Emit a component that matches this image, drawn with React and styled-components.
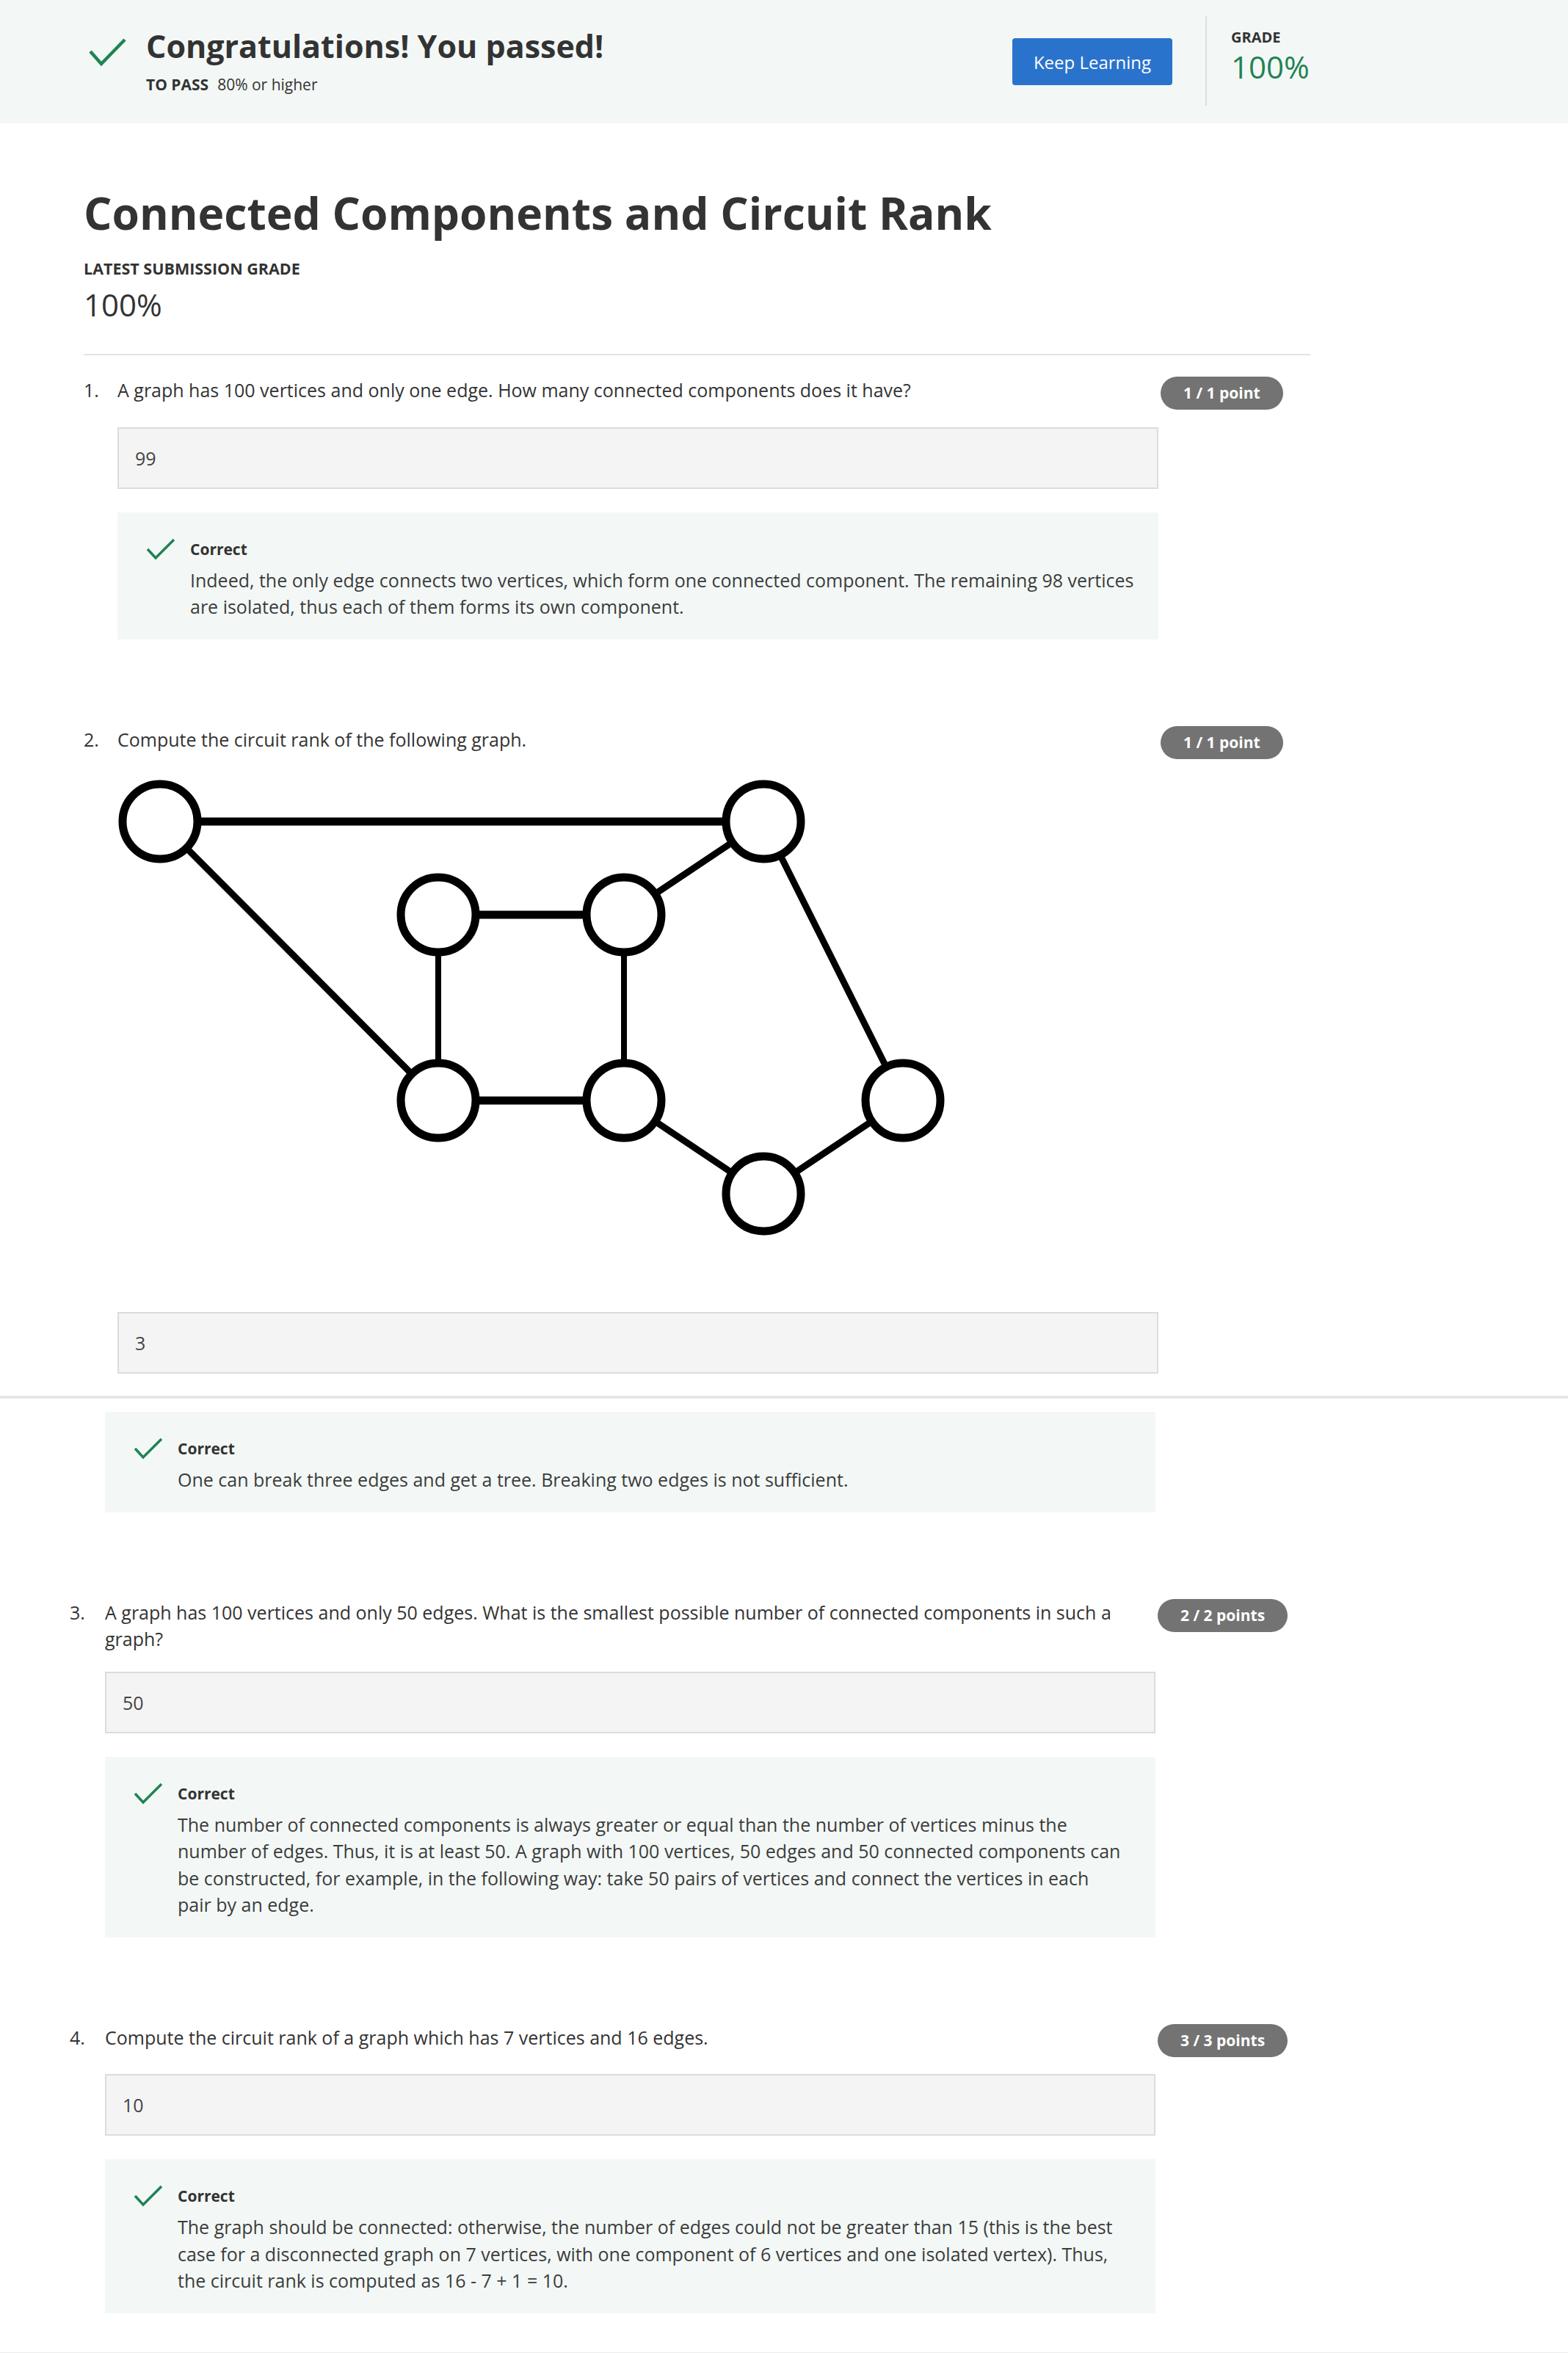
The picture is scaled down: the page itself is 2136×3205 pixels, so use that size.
import React from 'react';
import styled, { createGlobalStyle } from 'styled-components';

const GlobalStyle = createGlobalStyle`
  body {
    margin: 0;
    background: #fff;
    font-family: 'Open Sans', 'Liberation Sans', sans-serif;
    color: #333;
  }
`;

const Page = styled.div`
  width: 2136px;
`;

/* ---------- result banner ---------- */

const Banner = styled.header`
  display: flex;
  height: 168px;
  box-sizing: border-box;
  padding: 0 299px 0 121px;
  background: #f3f8f6;
`;

const PassGroup = styled.div`
  flex: 1;
  display: flex;
  gap: 26px;
  padding-top: 37px;
`;

const BigCheck = styled.svg`
  flex-shrink: 0;
  margin-top: 14px;
`;

const PassTitle = styled.h2`
  margin: 0;
  font-size: 43px;
  line-height: 52px;
  font-weight: 700;
  color: #333;
`;

const PassMeta = styled.div`
  margin-top: 11px;
  font-size: 21px;
  line-height: 30px;
  color: #333;

  b {
    font-weight: 700;
    margin-right: 12px;
  }
`;

const KeepButton = styled.button`
  align-self: center;
  width: 218px;
  height: 64px;
  border: none;
  border-radius: 4px;
  background: #2a73cc;
  color: #fff;
  font-family: inherit;
  font-size: 24px;
  cursor: pointer;
`;

const Divider = styled.div`
  width: 2px;
  margin: 22px 33px 24px 45px;
  background: #dedede;
`;

const GradeBlock = styled.div`
  width: 160px;
  padding-top: 37px;
`;

const GradeLabel = styled.div`
  font-size: 20px;
  line-height: 28px;
  font-weight: 700;
  color: #333;
`;

const GradeValue = styled.div`
  font-size: 42px;
  line-height: 52px;
  color: #1f8354;
`;

/* ---------- sheets ---------- */

const Sheet = styled.section`
  padding: ${(p) => p.$pad};
  border-bottom: ${(p) => p.$edge};
`;

const Title = styled.h1`
  margin: 0;
  font-size: 60.5px;
  line-height: 72px;
  font-weight: 700;
  color: #333;
`;

const SubLabel = styled.div`
  margin-top: 25px;
  font-size: 21.5px;
  line-height: 30px;
  font-weight: 700;
  text-transform: uppercase;
`;

const Score = styled.div`
  margin-top: 7px;
  font-size: 42px;
  line-height: 54px;
  color: #333;
`;

const Rule = styled.hr`
  width: 1671px;
  height: 2px;
  margin: 40px 0 29px;
  border: none;
  background: #e4e4e4;
`;

const Question = styled.div`
  display: grid;
  grid-template-columns: ${(p) => p.$num}px ${(p) => p.$col}px auto;
  align-items: start;
  margin-bottom: ${(p) => (p.$last ? 0 : 118)}px;
`;

const Num = styled.div`
  font-size: 25px;
  line-height: 36.5px;
  color: #333;
`;

const Prompt = styled.div`
  font-size: 25px;
  line-height: 36.5px;
  color: #333;
`;

const Badge = styled.span`
  grid-column: 3;
  grid-row: 1 / span 2;
  justify-self: start;
  margin-left: 3px;
  height: 45px;
  padding: 0 31px;
  border-radius: 23px;
  background: #737373;
  color: #fff;
  font-size: 21px;
  line-height: 45px;
  font-weight: 700;
  white-space: nowrap;
`;

const Body = styled.div`
  grid-column: 2;
  grid-row: 2;
  display: flex;
  flex-direction: column;
  gap: 32px;
  margin-top: ${(p) => p.$top}px;
`;

const AnswerBox = styled.div`
  display: flex;
  align-items: center;
  height: 84px;
  box-sizing: border-box;
  padding: 0 22px;
  border: 2px solid #dcdcdc;
  background: #f4f4f4;
  font-size: 25px;
  color: #444;
`;

const Feedback = styled.div`
  display: grid;
  grid-template-columns: 38px 1fr;
  column-gap: 22px;
  padding: 34px ${(p) => p.$pr}px 26px 39px;
  background: #f3f8f6;
`;

const SmallCheck = styled.svg`
  margin-top: 1px;
`;

const Verdict = styled.div`
  font-size: 21px;
  line-height: 32px;
  font-weight: 700;
  color: #333;
`;

const Explain = styled.div`
  grid-column: 2;
  margin-top: 8px;
  font-size: 25px;
  line-height: 36.5px;
  color: #3c3c3c;
`;

const GraphPic = styled.svg`
  display: block;
  margin-bottom: 64px;
`;

const Check = ({ big }) =>
  big ? (
    <BigCheck width="52" height="40" viewBox="0 0 52 40">
      <polyline points="2,19 17,36 49,3" fill="none" stroke="#1f8354" strokeWidth="4.5" />
    </BigCheck>
  ) : (
    <SmallCheck width="40" height="30" viewBox="0 0 40 30">
      <polyline points="2,15 13,27 38,2" fill="none" stroke="#1f8354" strokeWidth="3.5" />
    </SmallCheck>
  );

const Correct = ({ children, pr = 30 }) => (
  <Feedback $pr={pr}>
    <Check />
    <Verdict>Correct</Verdict>
    <Explain>{children}</Explain>
  </Feedback>
);

const nodes = [
  [58, 68], [880, 68], [437, 195], [690, 195],
  [437, 448], [690, 448], [1070, 448], [880, 575],
];

const edges = [
  [0, 1, 11], [0, 4, 9], [1, 3, 9], [1, 6, 9], [2, 3, 11],
  [2, 4, 8], [3, 5, 8], [4, 5, 11], [5, 7, 9], [7, 6, 9],
];

const Graph = () => (
  <GraphPic width="1140" height="640" viewBox="0 0 1140 640">
    {edges.map(([a, b, w], i) => (
      <line key={i} x1={nodes[a][0]} y1={nodes[a][1]} x2={nodes[b][0]} y2={nodes[b][1]} stroke="#000" strokeWidth={w} />
    ))}
    {nodes.map(([x, y], i) => (
      <circle key={i} cx={x} cy={y} r="51" fill="#fff" stroke="#000" strokeWidth="11" />
    ))}
  </GraphPic>
);

const App = () => (
  <Page>
    <GlobalStyle />
    <Banner>
      <PassGroup>
        <Check big />
        <div>
          <PassTitle>Congratulations! You passed!</PassTitle>
          <PassMeta>
            <b>TO PASS</b>80% or higher
          </PassMeta>
        </div>
      </PassGroup>
      <KeepButton>Keep Learning</KeepButton>
      <Divider />
      <GradeBlock>
        <GradeLabel>GRADE</GradeLabel>
        <GradeValue>100%</GradeValue>
      </GradeBlock>
    </Banner>

    <Sheet $pad="86px 0 30px 114px" $edge="4px solid #e6e6e6">
      <Title>Connected Components and Circuit Rank</Title>
      <SubLabel>Latest Submission Grade</SubLabel>
      <Score>100%</Score>
      <Rule />

      <Question $num={46} $col={1418}>
        <Num>1.</Num>
        <Prompt>A graph has 100 vertices and only one edge. How many connected components does it have?</Prompt>
        <Badge>1 / 1 point</Badge>
        <Body $top={32}>
          <AnswerBox>99</AnswerBox>
          <Correct>
            Indeed, the only edge connects two vertices, which form one connected component. The remaining 98 vertices
            are isolated, thus each of them forms its own component.
          </Correct>
        </Body>
      </Question>

      <Question $num={46} $col={1418} $last>
        <Num>2.</Num>
        <Prompt>Compute the circuit rank of the following graph.</Prompt>
        <Badge>1 / 1 point</Badge>
        <Body $top={26}>
          <Graph />
          <AnswerBox>3</AnswerBox>
        </Body>
      </Question>
    </Sheet>

    <Sheet $pad="18px 0 53px 95px" $edge="5px solid #ececec">
      <Question $num={48} $col={1431}>
        <Body $top={0}>
          <Correct pr={44}>One can break three edges and get a tree. Breaking two edges is not sufficient.</Correct>
        </Body>
      </Question>

      <Question $num={48} $col={1431}>
        <Num>3.</Num>
        <Prompt>
          A graph has 100 vertices and only 50 edges. What is the smallest possible number of connected components in
          such a graph?
        </Prompt>
        <Badge>2 / 2 points</Badge>
        <Body $top={26}>
          <AnswerBox>50</AnswerBox>
          <Correct pr={44}>
            The number of connected components is always greater or equal than the number of vertices minus the number
            of edges. Thus, it is at least 50. A graph with 100 vertices, 50 edges and 50 connected components can be
            constructed, for example, in the following way: take 50 pairs of vertices and connect the vertices in each
            pair by an edge.
          </Correct>
        </Body>
      </Question>

      <Question $num={48} $col={1431} $last>
        <Num>4.</Num>
        <Prompt>Compute the circuit rank of a graph which has 7 vertices and 16 edges.</Prompt>
        <Badge>3 / 3 points</Badge>
        <Body $top={32}>
          <AnswerBox>10</AnswerBox>
          <Correct pr={44}>
            The graph should be connected: otherwise, the number of edges could not be greater than 15 (this is the best
            case for a disconnected graph on 7 vertices, with one component of 6 vertices and one isolated vertex). Thus,
            the circuit rank is computed as 16 - 7 + 1 = 10.
          </Correct>
        </Body>
      </Question>
    </Sheet>
  </Page>
);

export default App;
